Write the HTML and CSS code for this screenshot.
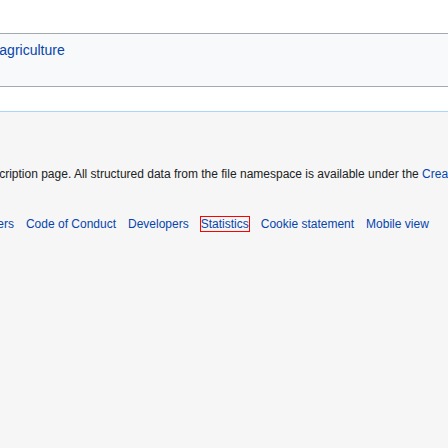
FILE: index.html
```html
<!DOCTYPE html>
<html lang="en">
<head>
<meta charset="utf-8">
<title>File page footer</title>
<link rel="stylesheet" href="styles.css">
</head>
<body>
<div class="page">
  <div class="content">
    <div class="catlinks">Categories: <a href="#">Agriculture by country</a> | <a href="#">Farming</a> | <a href="#">agriculture</a></div>
  </div>
  <footer class="footer">
    <ul class="info">
      <li>Files are available under licenses specified on their description page. All structured data from the file namespace is available under the <a href="#">Creative Commons CC0 License</a>; all unstructured text is available under the <a href="#">Creative Commons Attribution-ShareAlike License</a>; additional terms may apply.</li>
    </ul>
    <ul class="places">
      <li><a href="#">Privacy policy</a></li>
      <li><a href="#">About Wikimedia Commons</a></li>
      <li><a href="#">Disclaimers</a></li>
      <li><a href="#">Code of Conduct</a></li>
      <li><a href="#">Developers</a></li>
      <li><a href="#" class="focused">Statistics</a></li>
      <li><a href="#">Cookie statement</a></li>
      <li><a href="#">Mobile view</a></li>
    </ul>
  </footer>
</div>
</body>
</html>
```
FILE: styles.css
```css
html, body {
  margin: 0;
  padding: 0;
  background: #f6f6f6;
  overflow: hidden;
  height: 100%;
}

body {
  font-family: "Liberation Sans", Arial, sans-serif;
  color: #202122;
}

a {
  color: #0645ad;
  text-decoration: none;
}

.page {
  margin-left: -295px;
  width: 1400px;
}

.content {
  background: #ffffff;
  padding: 33px 0 24px;
}

.catlinks {
  border: 1px solid #a2a9b1;
  background: #f8f9fa;
  padding: 8px 0 28px 9px;
  font-size: 14px;
  line-height: 16px;
  white-space: nowrap;
}

.footer {
  border-top: 1px solid #a7d7f9;
  background: #f6f6f6;
  padding-top: 54px;
  font-size: 12px;
  line-height: 16px;
}

.info,
.places {
  list-style: none;
  margin: 0;
  padding: 0;
  white-space: nowrap;
}

.places {
  display: flex;
  gap: 12px;
  margin-top: 34px;
  padding-left: 1.5px;
}

.focused {
  outline: 1px solid #ff0000;
}
```
